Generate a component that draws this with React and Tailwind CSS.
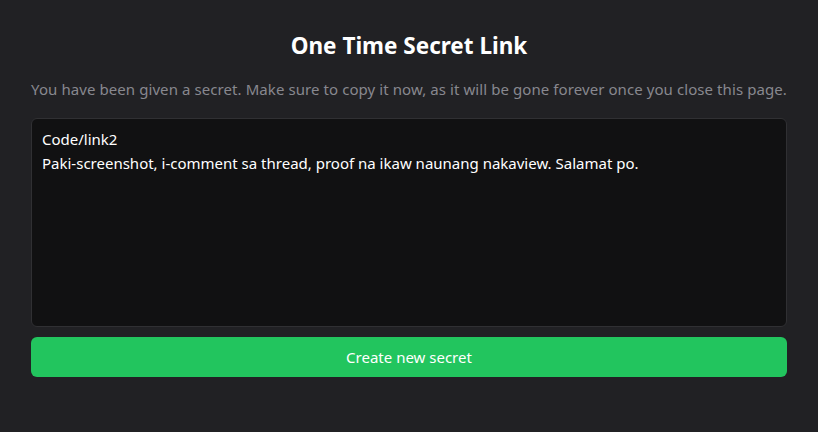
export default function App() {
  return (
    <div
      className="min-h-screen bg-[#212124] flex flex-col items-center px-[31px] pt-[30px]"
      style={{ fontFamily: '"Noto Sans", "Open Sans", sans-serif' }}
    >
      <h1 className="text-[22.5px] leading-[32px] font-bold text-white">One Time Secret Link</h1>
      <p className="mt-[16px] text-[15px] leading-[22px] tracking-[0.08px] text-[#88888f]">
        You have been given a secret. Make sure to copy it now, as it will be gone forever once you close this page.
      </p>

      <div className="mt-[18px] w-full flex flex-col gap-[10px]">
        <textarea
          readOnly
          className="w-full h-[209px] resize-none rounded-md border border-[#303033] bg-[#111112] px-[10px] py-[8px] text-[15px] leading-[24px] text-white outline-none"
          defaultValue={'Code/link2\nPaki-screenshot, i-comment sa thread, proof na ikaw naunang nakaview. Salamat po.'}
        />
        <button className="w-full h-[40px] rounded-md bg-[#22c55e] text-[15px] text-white">
          Create new secret
        </button>
      </div>
    </div>
  )
}
